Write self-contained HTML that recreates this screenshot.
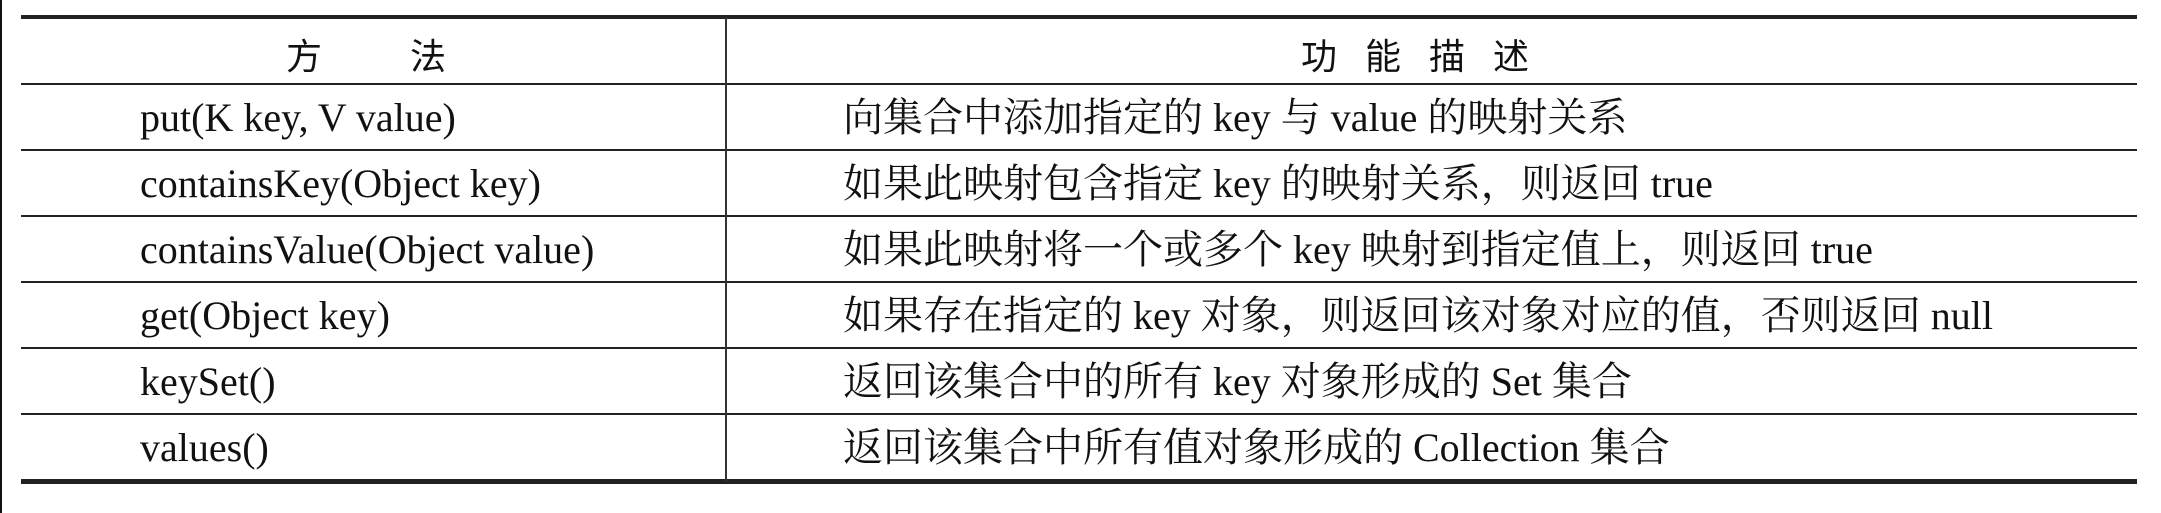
<!DOCTYPE html>
<html><head><meta charset="utf-8"><style>
html,body{margin:0;padding:0;background:#fff;}
body{width:2161px;height:513px;position:relative;overflow:hidden;font-family:"Liberation Serif","Noto Serif CJK SC",serif;color:#111;}
.edge{position:absolute;left:0;top:0;width:2px;height:513px;background:#111;}
.h{position:absolute;left:21px;width:2116px;background:#222;}
.v{position:absolute;left:725px;top:17px;width:2px;height:464px;background:#333;}
.t{position:absolute;font-size:40px;line-height:66px;height:66px;white-space:nowrap;}
.hd{position:absolute;top:19px;font-family:"Noto Sans CJK SC",sans-serif;font-weight:400;font-size:36px;line-height:70px;color:#111;}
</style></head><body>
<div class="edge"></div>
<div class="h" style="top:15px;height:4px"></div>
<div class="h" style="top:83px;height:2px"></div>
<div class="h" style="top:149px;height:2px"></div>
<div class="h" style="top:215px;height:2px"></div>
<div class="h" style="top:281px;height:2px"></div>
<div class="h" style="top:347px;height:2px"></div>
<div class="h" style="top:413px;height:2px"></div>
<div class="h" style="top:479px;height:5px"></div>
<div class="v"></div>

<div class="hd" style="left:286px">方</div>
<div class="hd" style="left:410px">法</div>
<div class="hd" style="left:1301px">功</div>
<div class="hd" style="left:1365px">能</div>
<div class="hd" style="left:1429px">描</div>
<div class="hd" style="left:1493px">述</div>

<div class="t" style="top:85px;left:140px">put(K key, V value)</div>
<div class="t" style="top:151px;left:140px">containsKey(Object key)</div>
<div class="t" style="top:217px;left:140px">containsValue(Object value)</div>
<div class="t" style="top:283px;left:140px">get(Object key)</div>
<div class="t" style="top:349px;left:140px">keySet()</div>
<div class="t" style="top:415px;left:140px">values()</div>

<div class="t" style="top:85px;left:843px">向集合中添加指定的 key 与 value 的映射关系</div>
<div class="t" style="top:151px;left:843px">如果此映射包含指定 key 的映射关系，则返回 true</div>
<div class="t" style="top:217px;left:843px">如果此映射将一个或多个 key 映射到指定值上，则返回 true</div>
<div class="t" style="top:283px;left:843px">如果存在指定的 key 对象，则返回该对象对应的值，否则返回 null</div>
<div class="t" style="top:349px;left:843px">返回该集合中的所有 key 对象形成的 Set 集合</div>
<div class="t" style="top:415px;left:843px">返回该集合中所有值对象形成的 Collection 集合</div>
</body></html>
